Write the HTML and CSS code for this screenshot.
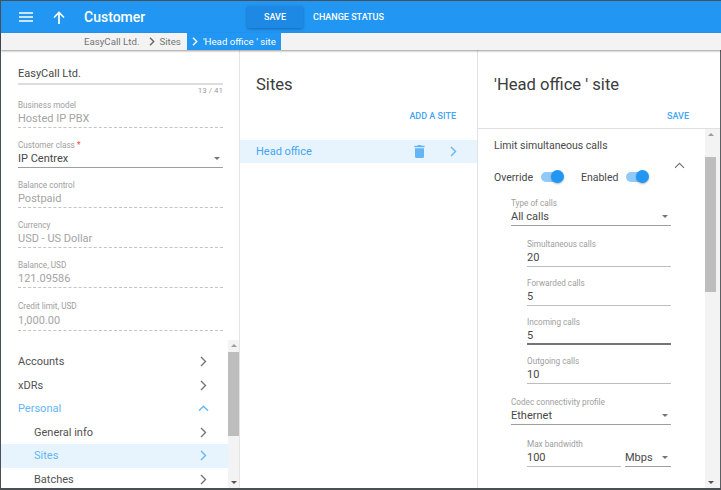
FILE: index.html
```html
<!DOCTYPE html>
<html lang="en">
<head>
  <meta charset="UTF-8">
  <title>Customer</title>
  <link rel="stylesheet" href="styles.css">
</head>
<body>
  <div class="app">
    <header class="topbar">
      <svg class="menu-icon" width="14" height="10" viewBox="0 0 14 10"><path d="M0 1h14M0 5h14M0 9h14" stroke="#fff" stroke-width="1.6"/></svg>
      <svg class="up-icon" width="12" height="13" viewBox="0 0 12 13"><path d="M6 13V1.500M1 6.500l5-5 5 5" fill="none" stroke="#fff" stroke-width="1.7"/></svg>
      <div class="page-title">Customer</div>
      <button class="btn-save">SAVE</button>
      <button class="btn-flat">CHANGE STATUS</button>
    </header>

    <nav class="crumbs">
      <span>EasyCall Ltd.</span>
      <svg class="crumb-arrow" width="6" height="9" viewBox="0 0 6 9"><path d="M1 .8l3.700 3.700L1 8.200" fill="none" stroke="#666" stroke-width="1.4"/></svg>
      <span>Sites</span>
      <span class="crumb-current">
        <svg width="6" height="9" viewBox="0 0 6 9"><path d="M1 .8l3.700 3.700L1 8.200" fill="none" stroke="#fff" stroke-width="1.4"/></svg>
        'Head office ' site
      </span>
    </nav>

    <main class="panels">
      <section class="panel panel-left">
        <div class="form">
          <div class="name-value">EasyCall Ltd.</div>
          <div class="counter">13 / 41</div>
          <div class="field">
            <label>Business model</label>
            <div class="value readonly">Hosted IP PBX</div>
          </div>
          <div class="field">
            <label>Customer class <i>*</i></label>
            <div class="value select">IP Centrex<b class="caret"></b></div>
          </div>
          <div class="field">
            <label>Balance control</label>
            <div class="value readonly">Postpaid</div>
          </div>
          <div class="field">
            <label>Currency</label>
            <div class="value readonly">USD - US Dollar</div>
          </div>
          <div class="field">
            <label>Balance, USD</label>
            <div class="value readonly">121.09586</div>
          </div>
          <div class="field last">
            <label>Credit limit, USD</label>
            <div class="value readonly">1,000.00</div>
          </div>
        </div>
        <div class="nav-wrap">
          <ul class="nav">
            <li>Accounts<svg width="7" height="11" viewBox="0 0 7 11"><path d="M1 1l4.500 4.500L1 10" fill="none" stroke="#757575" stroke-width="1.4"/></svg></li>
            <li>xDRs<svg width="7" height="11" viewBox="0 0 7 11"><path d="M1 1l4.500 4.500L1 10" fill="none" stroke="#757575" stroke-width="1.4"/></svg></li>
            <li class="open">Personal<svg class="chev-up" width="11" height="7" viewBox="0 0 11 7"><path d="M1 5.800l4.500-4.500L10 5.800" fill="none" stroke="#64b5f6" stroke-width="1.4"/></svg></li>
            <li class="sub">General info<svg width="7" height="11" viewBox="0 0 7 11"><path d="M1 1l4.500 4.500L1 10" fill="none" stroke="#757575" stroke-width="1.4"/></svg></li>
            <li class="sub active">Sites<svg width="7" height="11" viewBox="0 0 7 11"><path d="M1 1l4.500 4.500L1 10" fill="none" stroke="#64b5f6" stroke-width="1.4"/></svg></li>
            <li class="sub">Batches<svg width="7" height="11" viewBox="0 0 7 11"><path d="M1 1l4.500 4.500L1 10" fill="none" stroke="#757575" stroke-width="1.4"/></svg></li>
          </ul>
          <div class="scrollbar nav-scroll"><span class="up"></span><div class="thumb"></div><span class="down"></span></div>
        </div>
      </section>

      <section class="panel panel-mid">
        <h2>Sites</h2>
        <div class="action">ADD A SITE</div>
        <div class="site-row">
          <span class="site-name">Head office</span>
          <svg class="trash" width="11" height="13" viewBox="0 0 11 13"><path d="M4 0h3l.6.8h3v1.500H.4V.8h3zM1 3.200h9v8.300c0 .8-.6 1.500-1.400 1.500H2.400c-.8 0-1.400-.7-1.400-1.500z" fill="#64b5f6"/></svg>
          <svg width="7" height="11" viewBox="0 0 7 11"><path d="M1 1l4.500 4.500L1 10" fill="none" stroke="#64b5f6" stroke-width="1.4"/></svg>
        </div>
      </section>

      <section class="panel panel-right">
        <div class="right-head">
          <h2>'Head office ' site</h2>
          <div class="action">SAVE</div>
        </div>
        <div class="right-body">
          <div class="scroll-content">
            <div class="group-title">Limit simultaneous calls</div>
            <div class="toggles">
              <span>Override</span><b class="toggle"></b>
              <span class="toggle-second">Enabled</span><b class="toggle"></b>
              <svg class="collapse" width="11" height="7" viewBox="0 0 11 7"><path d="M1 5.800l4.500-4.500L10 5.800" fill="none" stroke="#757575" stroke-width="1.2"/></svg>
            </div>
            <div class="field level-1 first">
              <label>Type of calls</label>
              <div class="value select">All calls<b class="caret"></b></div>
            </div>
            <div class="field level-2">
              <label>Simultaneous calls</label>
              <div class="value input">20</div>
            </div>
            <div class="field level-2">
              <label>Forwarded calls</label>
              <div class="value input">5</div>
            </div>
            <div class="field level-2">
              <label>Incoming calls</label>
              <div class="value input focused">5</div>
            </div>
            <div class="field level-2">
              <label>Outgoing calls</label>
              <div class="value input">10</div>
            </div>
            <div class="field level-1">
              <label>Codec connectivity profile</label>
              <div class="value select">Ethernet<b class="caret"></b></div>
            </div>
            <div class="field level-2 band">
              <div class="band-main">
                <label>Max bandwidth</label>
                <div class="value input">100</div>
              </div>
              <div class="value select unit">Mbps<b class="caret"></b></div>
            </div>
          </div>
          <div class="scrollbar body-scroll"><span class="up"></span><div class="thumb"></div><span class="down"></span></div>
        </div>
      </section>
    </main>
  </div>
</body>
</html>
```
FILE: styles.css
```css
* {
  box-sizing: border-box;
}
html, body {
  height: 100%;
}
body {
  margin: 0;
  font-family: Roboto, "Liberation Sans", sans-serif;
  color: #484848;
  overflow: hidden;
}
.app {
  height: 490px;
  border: solid #4a4f55;
  border-width: 1px 0 2px 1px;
  display: flex;
  flex-direction: column;
  background: #fff;
}
.topbar {
  height: 32px;
  background: #2196f3;
  display: flex;
  align-items: center;
  flex: none;
}
.menu-icon {
  margin-left: 18px;
}
.up-icon {
  margin-left: 20px;
}
.page-title {
  margin-left: 19px;
  width: 163px;
  color: #fff;
  font-size: 14px;
  font-weight: 500;
}
.topbar button {
  border: 0;
  font-family: inherit;
  font-size: 9px;
  font-weight: 500;
  color: #fff;
  background: none;
  padding: 0;
}
.topbar .btn-save {
  width: 56px;
  height: 22px;
  background: #1e88e5;
  border-radius: 2px;
  box-shadow: 0 1px 3px rgba(0, 0, 0, .3);
}
.topbar .btn-flat {
  margin-left: 10px;
}
.crumbs {
  height: 17px;
  background: #f3f3f3;
  box-shadow: 0 1px 2px rgba(0, 0, 0, .4);
  padding-left: 83px;
  display: flex;
  align-items: center;
  font-size: 9.7px;
  color: #757575;
  flex: none;
  position: relative;
  z-index: 2;
}
.crumb-arrow {
  margin: 0 4px 0 10px;
}
.crumb-current {
  background: #2196f3;
  color: #fff;
  height: 17px;
  margin-left: 6px;
  padding: 0 5px;
  display: flex;
  align-items: center;
  gap: 5px;
}
.panels {
  flex: 1;
  display: flex;
  min-height: 0;
}
.panel {
  display: flex;
  flex-direction: column;
  min-height: 0;
}
.panel-left {
  width: 239px;
  border-right: 1px solid #e4e4e4;
}
.panel-mid {
  width: 238px;
  border-right: 1px solid #e4e4e4;
}
.panel-right {
  flex: 1;
  min-width: 0;
  border-right: 1px solid #5a5f64;
}
.form {
  padding: 0 16px 0 17px;
  flex: none;
}
.name-value {
  margin-top: 17px;
  font-size: 11px;
  line-height: 14px;
  padding-bottom: 2px;
  border-bottom: 2px solid #ddd;
}
.counter {
  font-size: 8px;
  line-height: 12px;
  text-align: right;
  color: #9e9e9e;
}
.field {
  margin-top: 7px;
  height: 33px;
}
.counter + .field {
  margin-top: 3px;
}
.field.last {
  margin-top: 8px;
}
.field.last .value {
  height: 20px;
  padding-top: 3px;
}
label {
  display: block;
  font-size: 8.2px;
  line-height: 10px;
  color: #9e9e9e;
}
label i {
  color: #f44336;
  font-style: normal;
}
.value {
  font-size: 11px;
  line-height: 14px;
  height: 18px;
  padding-top: 2px;
  position: relative;
}
.readonly {
  color: #a4a4a4;
  border-bottom: 1px dashed #c4c4c4;
}
.select {
  border-bottom: 1px solid #9e9e9e;
}
.input {
  border-bottom: 1px solid #bdbdbd;
}
.input.focused {
  border-bottom: 2px solid #757575;
}
.caret {
  position: absolute;
  right: 3px;
  top: 7px;
  border: 3px solid transparent;
  border-top: 3px solid #757575;
  border-bottom: 0;
  width: 0;
  height: 0;
}
.nav-wrap {
  flex: 1;
  min-height: 0;
  margin-top: 6px;
  display: flex;
  overflow: hidden;
}
.nav {
  list-style: none;
  margin: 0;
  padding: 10px 0 0;
  flex: 1;
  overflow: hidden;
}
.nav li {
  height: 23.5px;
  padding: 0 21px 0 17px;
  display: flex;
  align-items: center;
  justify-content: space-between;
  font-size: 11px;
  color: #525252;
}
.nav li.open {
  color: #64b5f6;
}
.nav li.sub {
  padding-left: 33px;
}
.nav li.active {
  background: #e8f4fd;
  color: #64b5f6;
}
.chev-up {
  margin-right: -2px;
}
.scrollbar {
  width: 11px;
  flex: none;
  background: #f3f3f3;
  display: flex;
  flex-direction: column;
  align-items: center;
}
.scrollbar .up,
.scrollbar .down {
  width: 0;
  height: 0;
  border: 3px solid transparent;
  border-top: 0;
  border-bottom: 3px solid #9e9e9e;
  margin: 4px 0 5px;
  flex: none;
}
.scrollbar .down {
  border-bottom: 0;
  border-top: 3px solid #555;
  margin: auto 0 4px;
}
.scrollbar .thumb {
  width: 100%;
  background: #bdbdbd;
}
.nav-scroll .thumb {
  height: 84px;
}
.panel-mid h2,
.right-head h2 {
  margin: 0;
  font-size: 16.6px;
  font-weight: 400;
  line-height: 20px;
  color: #3c3c3c;
}
.panel-mid h2 {
  padding: 25px 0 0 16px;
}
.action {
  font-size: 9px;
  font-weight: 500;
  color: #42a5f5;
  text-align: right;
  padding-right: 21px;
  margin-top: 15px;
  line-height: 12px;
}
.site-row {
  margin-top: 18px;
  height: 23px;
  background: #e8f4fd;
  color: #42a5f5;
  font-size: 11px;
  display: flex;
  align-items: center;
  padding: 0 20px 0 16px;
}
.site-name {
  flex: 1;
}
.trash {
  margin-right: 25px;
}
.right-head {
  height: 79px;
  padding: 25px 0 0 16px;
  border-bottom: 1px solid #e0e0e0;
  flex: none;
}
.right-head .action {
  padding-right: 31px;
}
.right-body {
  flex: 1;
  min-height: 0;
  display: flex;
  padding-right: 4px;
  background: #f3f3f3;
}
.scroll-content {
  flex: 1;
  background: #fff;
  padding: 10px 0 0 16px;
  overflow: hidden;
}
.body-scroll .up {
  margin-bottom: 21px;
}
.body-scroll .thumb {
  height: 135px;
}
.group-title {
  font-size: 10.5px;
  line-height: 14px;
}
.toggles {
  display: flex;
  align-items: center;
  font-size: 10.5px;
  margin-top: 17px;
  height: 14px;
  position: relative;
}
.toggle {
  width: 24px;
  height: 16px;
  margin-left: 7px;
  position: relative;
  flex: none;
}
.toggle::before {
  content: "";
  position: absolute;
  left: 1px;
  top: 3px;
  width: 22px;
  height: 10px;
  border-radius: 5px;
  background: #90caf9;
}
.toggle::after {
  content: "";
  position: absolute;
  right: 0;
  top: 1px;
  width: 13px;
  height: 13px;
  border-radius: 50%;
  background: #2196f3;
  box-shadow: 0 1px 2px rgba(0, 0, 0, .3);
}
.toggle-second {
  margin-left: 17px;
}
.collapse {
  position: absolute;
  left: 180px;
  top: -8px;
}
.level-1 {
  margin-left: 17px;
  width: 160px;
  height: 33px;
}
.level-1.first {
  margin-top: 14px;
}
.level-2 {
  margin-left: 33px;
  width: 144px;
  margin-top: 6px;
}
.level-1 + .level-2 {
  margin-top: 8px;
}
.level-2 + .level-1 {
  margin-top: 8px;
}
.level-1 + .band {
  margin-top: 9px;
  display: flex;
  gap: 4px;
}
.band-main {
  flex: 1;
}
.unit {
  width: 46px;
  margin-top: 10px;
}
```
